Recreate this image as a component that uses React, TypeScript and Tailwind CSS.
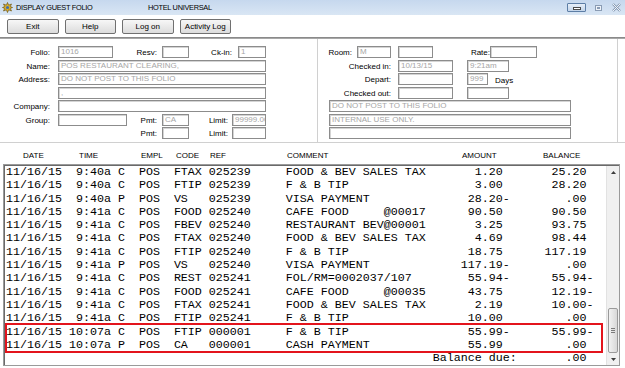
import React from "react";

const SANS = "[font-family:'Liberation_Sans',Arial,sans-serif]";

function Inp({ w, v = "" }: { w: string; v?: string }) {
  return (
    <div
      className={`${w} h-[12px] shrink-0 border border-[#8c8c8c] bg-white shadow-[inset_1px_1px_0_#d4d4d4] text-[8px] leading-[10px] text-[#a6a6a6] pl-[2px] overflow-hidden whitespace-nowrap`}
    >
      {v}
    </div>
  );
}

function Lbl({ w, t }: { w: string; t: string }) {
  return (
    <div className={`${w} shrink-0 text-right text-[8px] leading-[12px] pt-[1px] text-black whitespace-nowrap`}>{t}</div>
  );
}

function fmt(
  time: string,
  type: string,
  code: string,
  ref: string,
  comment: string,
  amt: string,
  bal: string
) {
  const num = (s: string, n: number) => {
    const neg = s.endsWith("-");
    const core = neg ? s.slice(0, -1) : s;
    return core.padStart(n) + (neg ? "-" : " ");
  };
  return (
    "11/16/15 " +
    time.padStart(6) +
    " " +
    type +
    "  POS  " +
    code.padEnd(4) +
    " " +
    ref +
    "     " +
    comment.padEnd(20) +
    num(amt, 11) +
    num(bal, 11)
  );
}

const rows = [
  fmt("9:40a", "C", "FTAX", "025239", "FOOD & BEV SALES TAX", "1.20", "25.20"),
  fmt("9:40a", "C", "FTIP", "025239", "F & B TIP", "3.00", "28.20"),
  fmt("9:40a", "P", "VS", "025239", "VISA PAYMENT", "28.20-", ".00"),
  fmt("9:41a", "C", "FOOD", "025240", "CAFE FOOD     @00017", "90.50", "90.50"),
  fmt("9:41a", "C", "FBEV", "025240", "RESTAURANT BEV@00001", "3.25", "93.75"),
  fmt("9:41a", "C", "FTAX", "025240", "FOOD & BEV SALES TAX", "4.69", "98.44"),
  fmt("9:41a", "C", "FTIP", "025240", "F & B TIP", "18.75", "117.19"),
  fmt("9:41a", "P", "VS", "025240", "VISA PAYMENT", "117.19-", ".00"),
  fmt("9:41a", "C", "REST", "025241", "FOL/RM=0002037/107", "55.94-", "55.94-"),
  fmt("9:41a", "C", "FOOD", "025241", "CAFE FOOD     @00035", "43.75", "12.19-"),
  fmt("9:41a", "C", "FTAX", "025241", "FOOD & BEV SALES TAX", "2.19", "10.00-"),
  fmt("9:41a", "C", "FTIP", "025241", "F & B TIP", "10.00", ".00"),
  fmt("10:07a", "C", "FTIP", "000001", "F & B TIP", "55.99-", "55.99-"),
  fmt("10:07a", "P", "CA", "000001", "CASH PAYMENT", "55.99", ".00"),
  " ".repeat(61) + "Balance due:" + ".00".padStart(10) + " ",
];

function TitleIcon() {
  return (
    <svg width="11" height="11" viewBox="0 0 11 11" className="shrink-0">
      <polygon
        points="5.5,0.5 6.6,3.2 9.5,2 8.2,4.6 10.5,5.5 8.2,6.4 9.5,9 6.6,7.8 5.5,10.5 4.4,7.8 1.5,9 2.8,6.4 0.5,5.5 2.8,4.6 1.5,2 4.4,3.2"
        fill="#e3b52a"
        stroke="#6b5416"
        strokeWidth="0.7"
      />
      <circle cx="5.5" cy="5.5" r="1.6" fill="#3d6fb0" />
    </svg>
  );
}

export default function App() {
  const btn =
    "w-[51.5px] h-[15px] border border-[#707070] rounded-[2px] bg-gradient-to-b from-[#f7f7f7] to-[#dcdcdc] text-[8px] leading-[13px] text-center text-black";
  return (
    <div className={`w-[625px] h-[368px] overflow-hidden bg-white flex flex-col ${SANS}`}>
      {/* title bar */}
      <div className="h-[15px] shrink-0 bg-gradient-to-b from-[#c6d8ee] to-[#d9e6f4] flex items-center relative">
        <div className="ml-[2px] mt-[-1px]">
          <TitleIcon />
        </div>
        <div className="ml-[3px] w-[132px] text-[7.4px] tracking-[-0.3px] leading-[10px] text-black">DISPLAY GUEST FOLIO</div>
        <div className="text-[7.4px] tracking-[-0.3px] leading-[10px] text-black">HOTEL UNIVERSAL</div>
        <div className="ml-auto mr-[3px] flex items-center gap-[7px]">
          <div className="w-[19px] h-[9px] border border-[#5d7ea6] rounded-[1px] bg-gradient-to-b from-[#e6eef8] to-[#c3d5ea] flex items-end justify-center pb-[1px]">
            <div className="w-[8px] h-[3px] bg-white border border-[#4a4a4a]" />
          </div>
          <div className="w-[11px] h-[9px] flex items-center justify-center">
            <div className="w-[7px] h-[6px] border border-[#8a9cb4] bg-[#eef3f9] flex items-center justify-center">
              <div className="w-[3px] h-[2px] border border-[#8a9cb4]" />
            </div>
          </div>
          <svg width="11" height="9" viewBox="0 0 11 9">
            <path d="M2 1 L9 8 M9 1 L2 8" stroke="#8a9cb4" strokeWidth="2.4" />
            <path d="M2 1 L9 8 M9 1 L2 8" stroke="#eef3f9" strokeWidth="1" />
          </svg>
        </div>
      </div>

      {/* toolbar */}
      <div className="h-[22px] shrink-0 flex items-start pt-[4px] pl-[7px] gap-[6px]">
        <div className={btn}>Exit</div>
        <div className={btn}>Help</div>
        <div className={btn}>Log on</div>
        <div className={btn}>Activity Log</div>
      </div>
      <div className="h-[2px] shrink-0 bg-[#8a8a8a] border-b border-[#a8a8a8]" />

      {/* form area */}
      <div className="h-[104px] shrink-0 flex border-b border-[#d0d0d0]">
        {/* left panel */}
        <div className="w-[318px] shrink-0 border-r border-[#d0d0d0] pt-[7px] pl-[3px] flex flex-col gap-[1.5px]">
          <div className="flex h-[12px]">
            <Lbl w="w-[47px]" t="Folio:" />
            <div className="w-[8px] shrink-0" />
            <Inp w="w-[55px]" v="1016" />
            <Lbl w="w-[44px]" t="Resv:" />
            <div className="w-[5px] shrink-0" />
            <Inp w="w-[27px]" />
            <Lbl w="w-[43px]" t="Ck-in:" />
            <div className="w-[6px] shrink-0" />
            <Inp w="w-[28px]" v="1" />
          </div>
          <div className="flex h-[12px]">
            <Lbl w="w-[47px]" t="Name:" />
            <div className="w-[8px] shrink-0" />
            <Inp w="w-[208px]" v="POS RESTAURANT CLEARING," />
          </div>
          <div className="flex h-[12px]">
            <Lbl w="w-[47px]" t="Address:" />
            <div className="w-[8px] shrink-0" />
            <Inp w="w-[208px]" v="DO NOT POST TO THIS FOLIO" />
          </div>
          <div className="flex h-[12px]">
            <div className="w-[55px] shrink-0" />
            <Inp w="w-[208px]" v="," />
          </div>
          <div className="flex h-[12px]">
            <Lbl w="w-[47px]" t="Company:" />
            <div className="w-[8px] shrink-0" />
            <Inp w="w-[208px]" />
          </div>
          <div className="flex h-[12px]">
            <Lbl w="w-[47px]" t="Group:" />
            <div className="w-[8px] shrink-0" />
            <Inp w="w-[69px]" />
            <Lbl w="w-[30px]" t="Pmt:" />
            <div className="w-[5px] shrink-0" />
            <Inp w="w-[27px]" v="CA" />
            <Lbl w="w-[39px]" t="Limit:" />
            <div className="w-[4px] shrink-0" />
            <Inp w="w-[34px]" v="99999.00" />
          </div>
          <div className="flex h-[12px]">
            <div className="w-[124px] shrink-0" />
            <Lbl w="w-[30px]" t="Pmt:" />
            <div className="w-[5px] shrink-0" />
            <Inp w="w-[27px]" />
            <Lbl w="w-[39px]" t="Limit:" />
            <div className="w-[4px] shrink-0" />
            <Inp w="w-[34px]" />
          </div>
        </div>
        {/* right panel */}
        <div className="w-[300px] shrink-0 border-r border-[#d0d0d0] pt-[7px] flex flex-col gap-[1.5px]">
          <div className="flex h-[12px]">
            <Lbl w="w-[34px]" t="Room:" />
            <div className="w-[5px] shrink-0" />
            <Inp w="w-[34px]" v="M" />
            <div className="w-[7px] shrink-0" />
            <Inp w="w-[35px]" />
            <Lbl w="w-[57px]" t="Rate:" />
            <Inp w="w-[47px]" />
          </div>
          <div className="flex h-[12px]">
            <Lbl w="w-[73px]" t="Checked in:" />
            <div className="w-[7px] shrink-0" />
            <Inp w="w-[55px]" v="10/13/15" />
            <div className="w-[14px] shrink-0" />
            <Inp w="w-[42px]" v="9:21am" />
          </div>
          <div className="flex h-[12px]">
            <Lbl w="w-[73px]" t="Depart:" />
            <div className="w-[7px] shrink-0" />
            <Inp w="w-[55px]" />
            <div className="w-[14px] shrink-0" />
            <Inp w="w-[21px]" v="999" />
            <div className="ml-[7px] text-[8px] leading-[12px] pt-[2px] text-black">Days</div>
          </div>
          <div className="flex h-[12px]">
            <Lbl w="w-[73px]" t="Checked out:" />
            <div className="w-[7px] shrink-0" />
            <Inp w="w-[55px]" />
            <div className="w-[14px] shrink-0" />
            <Inp w="w-[42px]" />
          </div>
          <div className="flex h-[12px] pl-[11px]">
            <Inp w="w-[242px]" v="DO NOT POST TO THIS FOLIO" />
          </div>
          <div className="flex h-[12px] pl-[11px]">
            <Inp w="w-[242px]" v="INTERNAL USE ONLY." />
          </div>
          <div className="flex h-[12px] pl-[11px]">
            <Inp w="w-[242px]" />
          </div>
        </div>
      </div>

      {/* header */}
      <div className="h-[21px] shrink-0 flex pl-[23px] pt-[8px] text-[8px] leading-[10px] text-black">
        <div className="w-[56px]">DATE</div>
        <div className="w-[62px]">TIME</div>
        <div className="w-[35px]">EMPL</div>
        <div className="w-[34px]">CODE</div>
        <div className="w-[77px]">REF</div>
        <div className="w-[175px]">COMMENT</div>
        <div className="w-[81px]">AMOUNT</div>
        <div>BALANCE</div>
      </div>

      {/* list box */}
      <div className="ml-[3px] w-[617px] h-[202px] shrink-0 border border-[#9a9a9a] shadow-[inset_1px_1px_0_#6a6a6a] relative flex">
        <div className="flex-1 pt-[1px] pl-[2px] pr-[2px] [font-family:'Courier_New','Liberation_Mono',monospace] text-[11.67px] leading-[13.3px] text-black whitespace-pre overflow-hidden">
          {rows.map((r, i) => (
            <div key={i} className="h-[13.3px]">
              {r}
            </div>
          ))}
        </div>
        <div className="w-[13px] shrink-0 bg-[#f0f0f0] border-l border-[#e2e2e2] flex flex-col mt-[1px]">
          <div className="h-[13px] flex items-center justify-center">
            <svg width="5" height="3" viewBox="0 0 5 3">
              <path d="M0 3 L2.5 0 L5 3 Z" fill="#3c3c3c" />
            </svg>
          </div>
          <div className="flex-1 flex flex-col justify-end items-center">
            <div className="w-[10px] h-[45px] border border-[#9a9a9a] rounded-[2px] bg-gradient-to-r from-[#f2f2f2] to-[#d8d8d8] flex flex-col items-center justify-center gap-[1px]">
              <div className="w-[4px] h-[1px] bg-[#7a7a7a]" />
              <div className="w-[4px] h-[1px] bg-[#7a7a7a]" />
              <div className="w-[4px] h-[1px] bg-[#7a7a7a]" />
            </div>
          </div>
          <div className="h-[12px] flex items-center justify-center">
            <svg width="5" height="3" viewBox="0 0 5 3">
              <path d="M0 0 L2.5 3 L5 0 Z" fill="#3c3c3c" />
            </svg>
          </div>
        </div>
        <div className="absolute left-[1px] top-[158px] w-[598px] h-[30px] border-2 border-[#e3141c] pointer-events-none" />
      </div>
    </div>
  );
}
